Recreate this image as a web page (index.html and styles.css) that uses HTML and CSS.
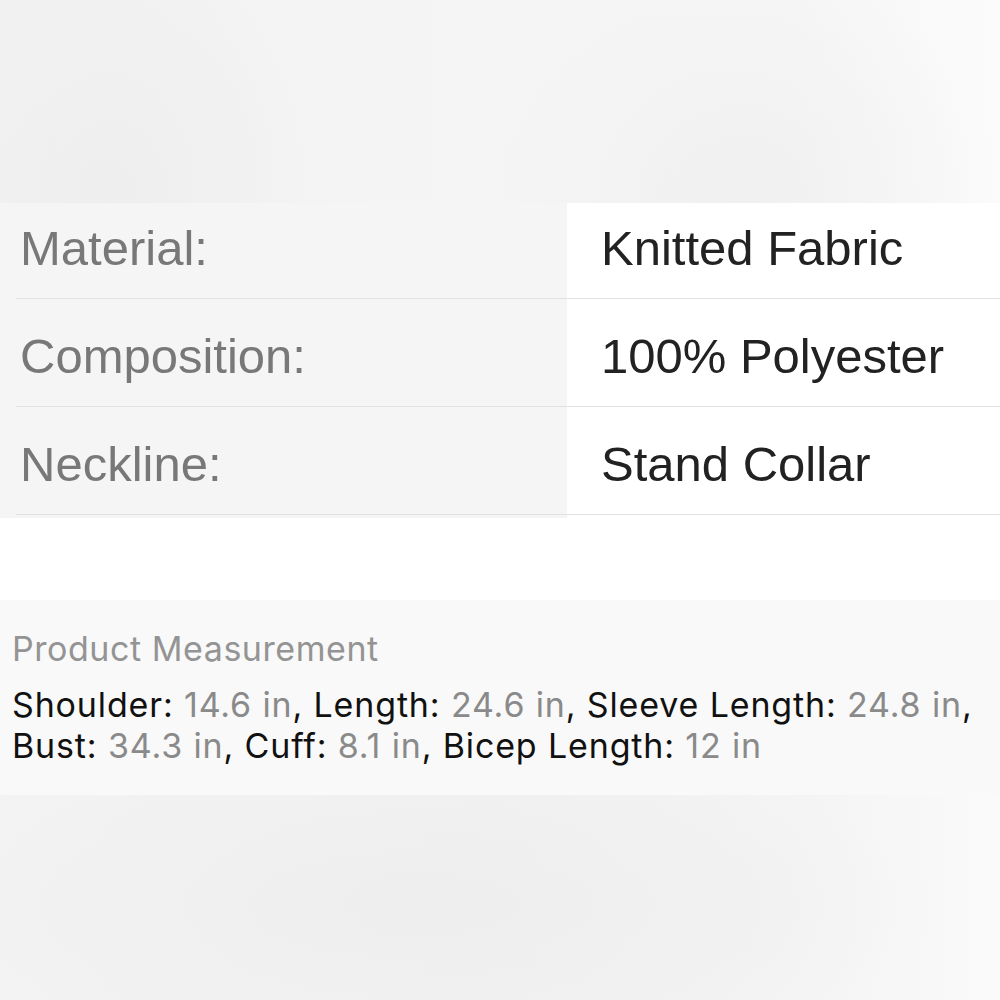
FILE: index.html
```html
<!DOCTYPE html>
<html lang="en">
<head>
    <meta charset="UTF-8">
    <title>Product Details</title>
    <link rel="stylesheet" href="styles.css">
</head>
<body>
    <div class="top-space"></div>

    <!-- Specification table -->
    <div class="spec-table">
        <div class="spec-row spec-row-first">
            <div class="spec-label">Material:</div>
            <div class="spec-value">Knitted Fabric</div>
        </div>
        <div class="spec-row">
            <div class="spec-label">Composition:</div>
            <div class="spec-value">100% Polyester</div>
        </div>
        <div class="spec-row">
            <div class="spec-label">Neckline:</div>
            <div class="spec-value">Stand Collar</div>
        </div>
    </div>

    <!-- Measurements -->
    <div class="measure-box">
        <div class="measure-title">Product Measurement</div>
        <div class="measure-text">
            Shoulder: <span class="num">14.6 in</span>, Length: <span class="num">24.6 in</span>, Sleeve Length: <span class="num">24.8 in</span>,
            Bust: <span class="num">34.3 in</span>, Cuff: <span class="num">8.1 in</span>, Bicep Length: <span class="num">12 in</span>
        </div>
    </div>

    <div class="bottom-space"></div>
</body>
</html>
```

FILE: styles.css
```css
/* Base */
body {
    margin: 0;
    padding: 0;
    font-family: "Liberation Sans", Arial, sans-serif;
    background: #ffffff;
}

.top-space {
    height: 203px;
    background:
        radial-gradient(ellipse 220px 260px at 110px 190px, #eeeeee, rgba(238,238,238,0) 100%),
        radial-gradient(ellipse 260px 240px at 740px 200px, #f0f0f0, rgba(240,240,240,0) 100%),
        linear-gradient(to right, #f2f2f2 0%, #f5f5f5 50%, #f6f6f6 80%, #fbfbfb 100%);
}

/* Spec table */
.spec-table {
    background: linear-gradient(to right, #f5f5f5 567px, #ffffff 567px);
    padding-bottom: 3px;
}
.spec-row {
    display: grid;
    grid-template-columns: 551px 1fr;
    margin-left: 16px;
    padding-top: 29px;
    padding-bottom: 22px;
    border-bottom: 1px solid #e2e2e2;
    font-size: 49px;
    line-height: 56px;
}
.spec-row-first { padding-top: 17px; }
.spec-label {
    padding-left: 4px;
    color: #787878;
}
.spec-value {
    padding-left: 34px;
    color: #222222;
}

/* Measurements */
.measure-box {
    margin-top: 82px;
    background: #f9f9f9;
    padding: 29px 12px 29px 12px;
    font-family: Inter, "Noto Sans", sans-serif;
    font-size: 34px;
}
.measure-title {
    line-height: 40px;
    color: #949494;
    margin-bottom: 15px;
    letter-spacing: 0.55px;
}
.measure-text {
    line-height: 41px;
    color: #111111;
    letter-spacing: 0.85px;
}
.num { color: #8a8a8a; }

.bottom-space {
    height: 205px;
    background:
        radial-gradient(ellipse 520px 160px at 420px 110px, #eeeeee, rgba(238,238,238,0) 100%),
        linear-gradient(to right, #f3f3f3 0%, #f1f1f1 50%, #f4f4f4 80%, #fafafa 100%);
}
```
